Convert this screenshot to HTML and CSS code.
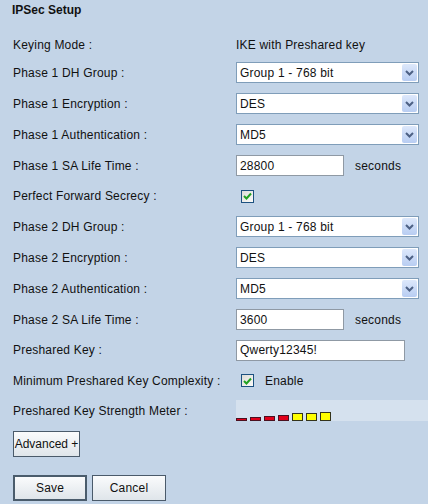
FILE: index.html
```html
<!DOCTYPE html>
<html lang="en">
<head>
    <meta charset="UTF-8">
    <meta name="viewport" content="width=device-width, initial-scale=1.0">
    <title>IPSec Setup</title>
    <link rel="stylesheet" href="styles.css">
</head>
<body>
    <div class="page">
        <h2 class="title">IPSec Setup</h2>

        <form class="ipsec-form">
            <div class="row row-first">
                <span class="label">Keying Mode :</span>
                <span class="value">IKE with Preshared key</span>
            </div>

            <!-- Phase 1 -->
            <div class="row">
                <label class="label">Phase 1 DH Group :</label>
                <div class="select">
                    <select><option>Group 1 - 768 bit</option></select>
                    <span class="arrow"><svg width="9" height="6" viewBox="0 0 9 6"><path d="M1 1 L4.5 4.5 L8 1" fill="none" stroke="#4d6185" stroke-width="2"/></svg></span>
                </div>
            </div>
            <div class="row">
                <label class="label">Phase 1 Encryption :</label>
                <div class="select">
                    <select><option>DES</option></select>
                    <span class="arrow"><svg width="9" height="6" viewBox="0 0 9 6"><path d="M1 1 L4.5 4.5 L8 1" fill="none" stroke="#4d6185" stroke-width="2"/></svg></span>
                </div>
            </div>
            <div class="row">
                <label class="label">Phase 1 Authentication :</label>
                <div class="select">
                    <select><option>MD5</option></select>
                    <span class="arrow"><svg width="9" height="6" viewBox="0 0 9 6"><path d="M1 1 L4.5 4.5 L8 1" fill="none" stroke="#4d6185" stroke-width="2"/></svg></span>
                </div>
            </div>
            <div class="row">
                <label class="label">Phase 1 SA Life Time :</label>
                <div class="value">
                    <input type="text" class="text short-input" value="28800">
                    <span class="unit">seconds</span>
                </div>
            </div>
            <div class="row row-30">
                <label class="label">Perfect Forward Secrecy :</label>
                <div class="value">
                    <span class="check"><svg width="9" height="8" viewBox="0 0 9 8"><path d="M1 4 L3.5 6.5 L8 1.5" fill="none" stroke="#21a121" stroke-width="2"/></svg></span>
                </div>
            </div>

            <!-- Phase 2 -->
            <div class="row">
                <label class="label">Phase 2 DH Group :</label>
                <div class="select">
                    <select><option>Group 1 - 768 bit</option></select>
                    <span class="arrow"><svg width="9" height="6" viewBox="0 0 9 6"><path d="M1 1 L4.5 4.5 L8 1" fill="none" stroke="#4d6185" stroke-width="2"/></svg></span>
                </div>
            </div>
            <div class="row">
                <label class="label">Phase 2 Encryption :</label>
                <div class="select">
                    <select><option>DES</option></select>
                    <span class="arrow"><svg width="9" height="6" viewBox="0 0 9 6"><path d="M1 1 L4.5 4.5 L8 1" fill="none" stroke="#4d6185" stroke-width="2"/></svg></span>
                </div>
            </div>
            <div class="row">
                <label class="label">Phase 2 Authentication :</label>
                <div class="select">
                    <select><option>MD5</option></select>
                    <span class="arrow"><svg width="9" height="6" viewBox="0 0 9 6"><path d="M1 1 L4.5 4.5 L8 1" fill="none" stroke="#4d6185" stroke-width="2"/></svg></span>
                </div>
            </div>
            <div class="row">
                <label class="label">Phase 2 SA Life Time :</label>
                <div class="value">
                    <input type="text" class="text short-input" value="3600">
                    <span class="unit">seconds</span>
                </div>
            </div>

            <!-- Key -->
            <div class="row row-30">
                <label class="label">Preshared Key :</label>
                <div class="value">
                    <input type="text" class="text key-input" value="Qwerty12345!">
                </div>
            </div>
            <div class="row">
                <label class="label">Minimum Preshared Key Complexity :</label>
                <div class="value">
                    <span class="check"><svg width="9" height="8" viewBox="0 0 9 8"><path d="M1 4 L3.5 6.5 L8 1.5" fill="none" stroke="#21a121" stroke-width="2"/></svg></span>
                    <span class="enable">Enable</span>
                </div>
            </div>
            <div class="row row-29">
                <span class="label">Preshared Key Strength Meter :</span>
                <div class="meter">
                    <span class="bar red" style="height: 3px"></span>
                    <span class="bar red" style="height: 4px"></span>
                    <span class="bar red" style="height: 5px"></span>
                    <span class="bar red" style="height: 6px"></span>
                    <span class="bar yellow" style="height: 8px"></span>
                    <span class="bar yellow" style="height: 8px"></span>
                    <span class="bar yellow" style="height: 9px"></span>
                </div>
            </div>

            <button type="button" class="btn btn-advanced">Advanced +</button>

            <div class="actions">
                <button type="button" class="btn btn-save">Save</button>
                <button type="button" class="btn btn-cancel">Cancel</button>
            </div>
        </form>
    </div>
</body>
</html>
```

FILE: styles.css
```css
body {
    margin: 0;
    font-family: "Liberation Sans", Arial, sans-serif;
    font-size: 12px;
    letter-spacing: 0.2px;
    color: #111;
    background-color: #c3d4e7;
}

.page {
    height: 504px;
    padding: 0 0 0 13px;
    overflow: hidden;
}

.title {
    margin: 0 0 0 -1px;
    height: 20px;
    line-height: 20px;
    font-size: 12px;
    font-weight: bold;
    letter-spacing: 0;
}

.ipsec-form {
    display: flex;
    flex-direction: column;
    margin-top: 13px;
}

.row {
    display: grid;
    grid-template-columns: 223px 1fr;
    align-items: center;
    height: 31px;
}

.row-first {
    height: 24px;
}

.row-30 {
    height: 30px;
}

.row-29 {
    height: 29px;
}

.label {
    white-space: nowrap;
}

.value {
    display: flex;
    align-items: center;
}

/* select box with a drawn arrow button */
.select {
    display: flex;
    align-items: center;
    width: 181px;
    height: 19px;
    border: 1px solid #7f9db9;
    background: #fff;
}

.select select {
    flex: 1;
    appearance: none;
    -webkit-appearance: none;
    border: none;
    background: transparent;
    font-family: inherit;
    font-size: 12px;
    letter-spacing: 0.2px;
    color: #111;
    padding: 0 0 0 3px;
    height: 19px;
    outline: none;
}

.arrow {
    display: flex;
    align-items: center;
    justify-content: center;
    width: 15px;
    height: 17px;
    margin-right: 1px;
    background: linear-gradient(#dde8fb, #b8cdf2);
    border-radius: 2px;
}

.text {
    box-sizing: border-box;
    height: 21px;
    border: 1px solid #8f99a4;
    background: #fff;
    font-family: inherit;
    font-size: 12px;
    letter-spacing: 0.2px;
    color: #111;
    padding: 0 3px;
    outline: none;
}

.short-input {
    width: 108px;
}

.key-input {
    width: 169px;
}

.unit {
    margin-left: 11px;
}

.check {
    display: flex;
    align-items: center;
    justify-content: center;
    box-sizing: border-box;
    width: 13px;
    height: 13px;
    margin-left: 5px;
    border: 1px solid #1c5180;
    background: linear-gradient(135deg, #dcdcd7, #fbfbf9);
}

.enable {
    margin-left: 11px;
}

.meter {
    display: flex;
    align-items: flex-end;
    gap: 3px;
    height: 21px;
    margin-right: -1px;
    background: #d5e1ee;
    box-sizing: border-box;
}

.bar {
    box-sizing: border-box;
    width: 11px;
    border: 1px solid #2a1a1a;
}

.bar.red {
    background: #e0001a;
    border-color: #4a1020;
}

.bar.yellow {
    background: #ffff00;
    border-color: #33331a;
}

.btn {
    font-family: inherit;
    font-size: 12px;
    letter-spacing: 0.2px;
    white-space: nowrap;
    color: #111;
    border: 1px solid #4a5a6a;
    background: linear-gradient(#fafbfc, #dfe5ea);
    padding: 0;
    height: 26px;
}

.btn-advanced {
    align-self: flex-start;
    width: 67px;
    margin-top: 6px;
    letter-spacing: 0;
}

.actions {
    display: flex;
    gap: 5px;
    margin-top: 18px;
}

.btn-save {
    width: 74px;
    border: 2px solid #4a5c6c;
}

.btn-cancel {
    width: 74px;
}
```
